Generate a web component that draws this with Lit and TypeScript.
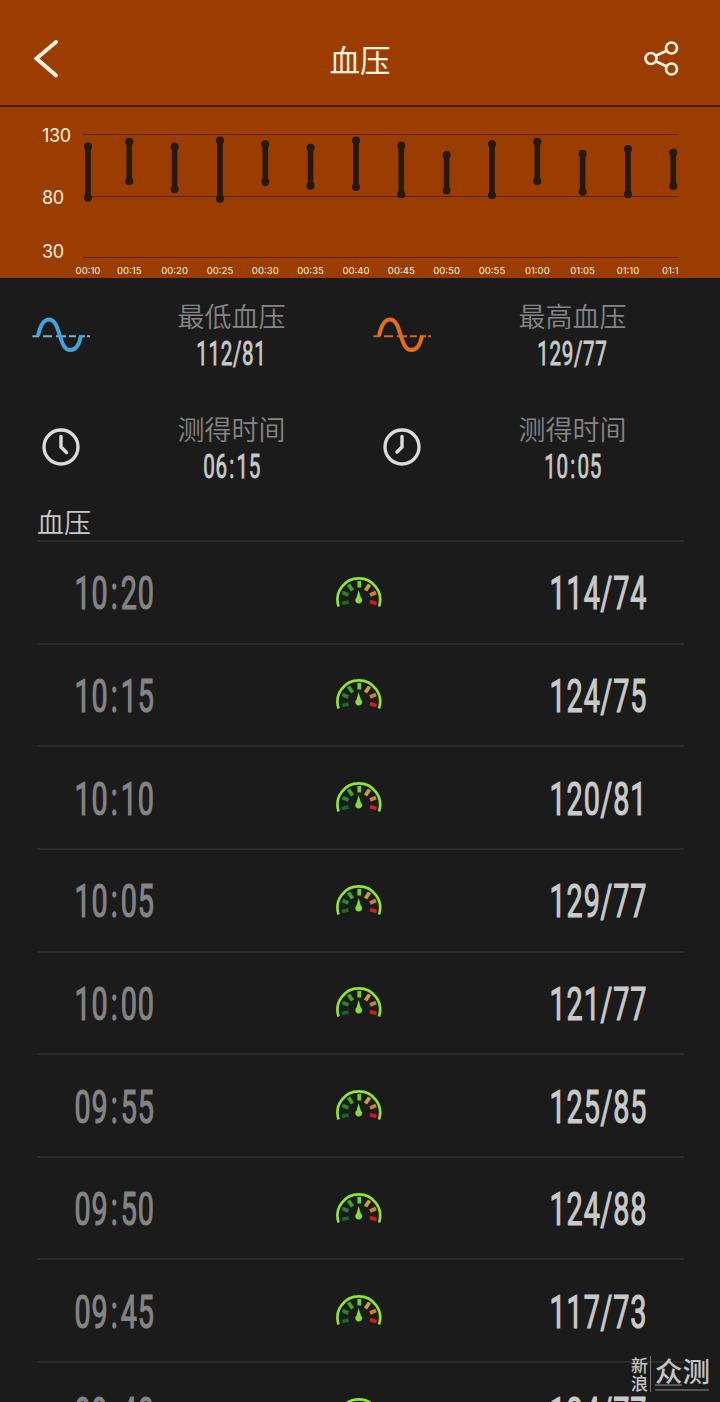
import { LitElement, html, svg, css } from "lit";
import { customElement, property } from "lit/decorators.js";

/** Narrow numeric text: every glyph is centred in its own fixed-width cell. */
@customElement("narrow-number")
class NarrowNumber extends LitElement {
  @property() value = "";
  @property({ type: Number }) size = 46;

  static styles = css`
    :host { display: inline-flex; }
    svg { display: block; overflow: visible; }
    text {
      font-family: Roboto, "Liberation Sans", sans-serif;
      font-weight: 400;
      fill: currentColor;
      stroke: currentColor;
      text-anchor: middle;
    }
  `;

  render() {
    const k = this.size / 46;
    const scale = 0.625;
    let at = 0;
    const centres = [...this.value].map((c) => {
      const w = (c === ":" ? 12 : c === "/" ? 12.5 : 17.1) * k;
      at += w;
      return ((at - w / 2) / scale).toFixed(2);
    });
    const h = 33 * k;
    return html`<svg width=${at} height=${h}>
      <text transform="scale(${scale} 1)" x=${centres.join(" ")} y=${h}
        font-size=${this.size} stroke-width=${1.2 * k}>${this.value}</text>
    </svg>`;
  }
}

const TIMES = ["00:10", "00:15", "00:20", "00:25", "00:30", "00:35", "00:40",
  "00:45", "00:50", "00:55", "01:00", "01:05", "01:10", "01:15"];
const BARS = [
  [88, 39.5, 90.7], [129.3, 34.7, 74], [174.6, 39.5, 82.3], [220, 33.4, 91.7],
  [265.3, 37.2, 75], [310.6, 40.8, 78.7], [356, 33.4, 80], [401.3, 38.4, 87.3],
  [446.6, 48, 83.5], [492, 37.2, 88.3], [537.3, 34.7, 74], [582.6, 46.8, 84.7],
  [628, 42, 87.3], [673.3, 45.7, 79],
];

@customElement("pressure-chart")
class PressureChart extends LitElement {
  static styles = css`
    :host { display: block; height: 171px; background: #9b3d00; }
    svg { display: block; }
    .grid { stroke: #5a210c; stroke-width: 1.1; }
    .bar { stroke: #241a12; stroke-width: 5.6; }
    .dot { fill: #241a12; }
    .axis { font: 400 18px Inter, sans-serif; letter-spacing: -0.3px; fill: #fff0dc; }
    .time { font: 400 9.6px Inter, sans-serif; fill: #fff0dc; text-anchor: middle; }
  `;
  render() {
    return html`<svg width="720" height="171">
      <clipPath id="plot"><rect x="70" y="0" width="608.3" height="171" /></clipPath>
      ${[27.5, 89.5, 150.5].map((y) => svg`<line class="grid" x1="83.5" x2="678" y1=${y} y2=${y} />`)}
      <text class="axis" x="42" y="34.8">130</text>
      <text class="axis" x="42" y="97">80</text>
      <text class="axis" x="42" y="151.3">30</text>
      <g clip-path="url(#plot)">
        ${BARS.map(([x, a, b], i) => svg`
          <line class="bar" x1=${x} x2=${x} y1=${a} y2=${b} />
          <circle class="dot" cx=${x} cy=${a} r="4" />
          <circle class="dot" cx=${x} cy=${b} r="4" />
          <text class="time" x=${x} y="167">${TIMES[i]}</text>`)}
      </g>
    </svg>`;
  }
}

const wave = (color: string, line: string) => html`
  <svg width="60" height="44" viewBox="0 0 60 44" fill="none">
    <path d="M1.5 23.200H8M12 23.200H21M25 23.200H35M38 23.200H45M48 23.200H54M56 23.200H59"
      stroke=${line} stroke-width="2" />
    <path d="M7 23C9.500 11 13 6.500 18 6.500C30 6.500 27 37 39.500 37C45.500 37 48.500 31 50 22.500"
      stroke=${color} stroke-width="4" />
  </svg>`;

const clock = (hand: string) => html`
  <svg width="40" height="40" viewBox="0 0 40 40" fill="none" stroke="#dcdcdc" stroke-width="3.3" stroke-linecap="round">
    <circle cx="20" cy="20" r="17" /><path d=${hand} stroke-width="3.4" />
  </svg>`;

const gauge = html`
  <svg width="50" height="38" viewBox="0 0 50 38" fill="none">
    <path d="M4.600 32.500A21.300 21.300 0 1 1 45 32.500" stroke="#8ee532" stroke-width="2.7" />
    <g stroke-width="3.800">
      <path d="M8 29.500L14.500 28" stroke="#176a21" />
      <path d="M8.500 18.500L14.500 21" stroke="#25862b" />
      <path d="M14.500 10.500L18.500 16.500" stroke="#3ea82d" />
      <path d="M25.300 7V13.500" stroke="#6fd02f" />
      <path d="M35.500 10.500L31.500 16.500" stroke="#d39a3e" />
      <path d="M42 18.500L36 21" stroke="#ca8437" />
      <path d="M42.500 29.500L36 27.700" stroke="#d41920" />
    </g>
    <path d="M24.600 16L22.600 23.500A3.400 3.400 0 1 0 26.800 23.500Z" fill="#83e02f" />
  </svg>`;

const STATS = [
  { icon: wave("#42a5d8", "#7ab6d4"), label: "最低血压", value: "112/81" },
  { icon: wave("#e56d19", "#c46a2b"), label: "最高血压", value: "129/77" },
  { icon: clock("M20 9.500V20L25.500 25.500"), label: "测得时间", value: "06:15" },
  { icon: clock("M20 9.500V20L15 25"), label: "测得时间", value: "10:05" },
];

const READINGS = [
  ["10:20", "114/74"], ["10:15", "124/75"], ["10:10", "120/81"],
  ["10:05", "129/77"], ["10:00", "121/77"], ["09:55", "125/85"],
  ["09:50", "124/88"], ["09:45", "117/73"], ["09:40", "124/77"],
];

@customElement("app-root")
class AppRoot extends LitElement {
  static styles = css`
    :host {
      display: block;
      position: relative;
      width: 720px;
      height: 1402px;
      overflow: hidden;
      background: #1b1b1b;
      color: #c9c9c9;
      font-family: "Noto Sans CJK SC", sans-serif;
    }
    svg { display: block; }
    header {
      box-sizing: border-box;
      height: 107px;
      padding: 12px 40px 0 32px;
      display: grid;
      grid-template-columns: 1fr auto 1fr;
      align-items: center;
      background: #9b3d00;
      border-bottom: 2px solid #4c1b08;
      color: #fff3e0;
    }
    .share { justify-self: end; }
    h1 { margin: 0; padding-left: 8px; font-size: 30.500px; line-height: 44px; font-weight: 400; }
    .stats {
      display: grid;
      grid-template-columns: 341px 341px;
      grid-template-rows: 112.5px 94px;
      padding-top: 18px;
    }
    .stat { display: grid; grid-template-columns: 122px 1fr; align-items: start; }
    .icon { display: flex; justify-content: center; align-items: center; height: 77px; }
    .info { display: flex; flex-direction: column; align-items: center; gap: 6px; }
    .label { font-size: 27px; line-height: 39px; font-weight: 350; color: #858585; }
    h2 {
      box-sizing: border-box;
      height: 39px;
      margin: 0 36px 0 37px;
      font-size: 27px;
      line-height: 37.500px;
      font-weight: 350;
    }
    .list { margin: -1.500px 36px 0 37px; }
    .row {
      box-sizing: border-box;
      height: 102.650px;
      display: grid;
      grid-template-columns: 260px 1fr auto;
      align-items: center;
      padding: 1px 37px 0 37px;
      border-top: 2px solid #2c2c2c;
    }
    .time { color: #848484; }
    .mark {
      position: absolute;
      left: 631px;
      top: 1356px;
      display: flex;
      color: #c4c4c4;
    }
    .sina {
      display: flex;
      flex-direction: column;
      width: 18px;
      padding-right: 1px;
      border-right: 1px solid #777;
      font-size: 17px;
      line-height: 18px;
      height: 36px;
      font-weight: 500;
    }
    .brand { margin-left: 4px; }
    .name { font-size: 27.500px; line-height: 29px; height: 28px; font-weight: 500; white-space: nowrap; }
    .rule { height: 2px; background: #555; width: 27px; }
    .rule.long { width: 54px; margin-top: 3px; }
  `;

  render() {
    return html`
      <header>
        <svg width="30" height="40" viewBox="0 0 30 40" fill="none" stroke="currentColor" stroke-width="4">
          <path d="M24 3L4.500 19.500L24 36.500" stroke-linecap="round" />
        </svg>
        <h1>血压</h1>
        <svg class="share" width="36" height="36" viewBox="0 0 36 36" fill="none" stroke="currentColor" stroke-width="2.700">
          <circle cx="7" cy="17.500" r="5.500" /><circle cx="27.500" cy="7" r="5.500" /><circle cx="27.500" cy="28" r="5.500" />
          <path d="M11.800 14.800L22.700 9.700M11.800 20.200L22.700 25.500" />
        </svg>
      </header>
      <pressure-chart></pressure-chart>
      <section class="stats">
        ${STATS.map((s) => html`<div class="stat">
          <div class="icon">${s.icon}</div>
          <div class="info"><span class="label">${s.label}</span>
            <narrow-number .value=${s.value} .size=${33}></narrow-number></div>
        </div>`)}
      </section>
      <h2>血压</h2>
      <section class="list">
        ${READINGS.map(([t, v]) => html`<div class="row">
          <narrow-number class="time" .value=${t}></narrow-number>
          ${gauge}
          <narrow-number .value=${v}></narrow-number>
        </div>`)}
      </section>
      <aside class="mark">
        <div class="sina"><span>新</span><span>浪</span></div>
        <div class="brand"><div class="name">众测</div><div class="rule"></div><div class="rule long"></div></div>
      </aside>
    `;
  }
}
